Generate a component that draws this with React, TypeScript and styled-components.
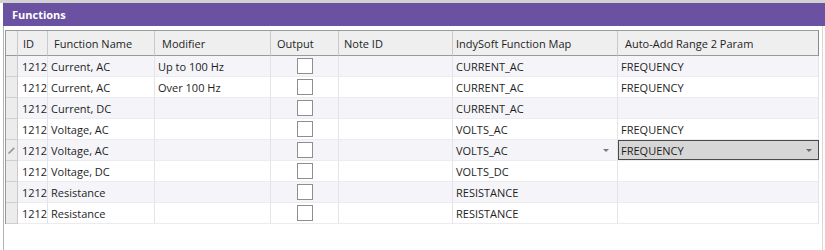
import React from "react";
import styled, { createGlobalStyle } from "styled-components";

const Global = createGlobalStyle`
  html, body { margin: 0; padding: 0; background: #ffffff; }
  body { font-family: "Open Sans", "Noto Sans", sans-serif; font-size: 11px; color: #1e1e1e; }
`;

const Window = styled.div`
  width: 825px;
  height: 250px;
  box-sizing: border-box;
  border-top: 3px solid #d2d2d2;
  display: flex;
  flex-direction: column;
  overflow: hidden;
  background: #fff;
`;

const TitleBar = styled.div`
  height: 23px;
  margin-left: 3px;
  background: #6a51a1;
  color: #fff;
  font-weight: 700;
  font-size: 11px;
  display: flex;
  align-items: center;
  padding-left: 9px;
  flex-shrink: 0;
`;

const Body = styled.div`
  flex: 1;
  display: flex;
  margin-left: 3px;
  padding-top: 4px;
  border-left: 1px solid #b4b4b4;
  border-right: 1px solid #d8d8d8;
  margin-right: 2px;
`;

const Table = styled.div`
  margin-left: 1px;
  align-self: flex-start;
  display: grid;
  grid-template-columns: 12px 30px 107px 116px 68px 114px 165px 201px;
  border-left: 1px solid #9a9a9a;
  border-top: 1px solid #9a9a9a;
`;

const HeadCell = styled.div<{ $last?: boolean; $pad: number }>`
  height: 24px;
  background: #efefef;
  border-right: 1px solid ${(p) => (p.$last ? "#8a8a8a" : "#c9c9c9")};
  border-bottom: 1px solid #9a9a9a;
  display: flex;
  align-items: center;
  padding-left: ${(p) => p.$pad}px;
  white-space: nowrap;
  overflow: hidden;
`;

const IndicatorHead = styled.div`
  height: 24px;
  background: #efefef;
  border-right: 1px solid #c9c9c9;
  border-bottom: 1px solid #9a9a9a;
`;

const Indicator = styled.div`
  height: 20px;
  background: #ececec;
  border-right: 1px solid #c9c9c9;
  border-bottom: 1px solid #cfcfcf;
  display: flex;
  align-items: center;
  justify-content: center;
`;

const Cell = styled.div<{ $odd: boolean; $center?: boolean; $pad?: number }>`
  height: 20px;
  background: ${(p) => (p.$odd ? "#f5f5f9" : "#ffffff")};
  border-right: 1px solid #e4e4e8;
  border-bottom: 1px solid #ececf0;
  display: flex;
  align-items: center;
  justify-content: ${(p) => (p.$center ? "center" : "flex-start")};
  padding-left: ${(p) => (p.$center ? 0 : p.$pad ?? 3)}px;
  white-space: nowrap;
  overflow: hidden;
`;

const EditCell = styled.div`
  height: 20px;
  background: #f5f5f9;
  border-bottom: 1px solid #ececf0;
  display: flex;
  align-items: stretch;
`;

const EditBox = styled.div`
  flex: 1;
  background: #d6d6d6;
  border: 1px solid #4a4a4a;
  display: flex;
  align-items: center;
  justify-content: space-between;
  padding-left: 2px;
  padding-right: 6px;
`;

const CellText = styled.span`
  flex: 1;
`;

const Arrow = styled.span`
  width: 0;
  height: 0;
  border-left: 3.5px solid transparent;
  border-right: 3.5px solid transparent;
  border-top: 3px solid #7a7a7a;
  margin-right: 8px;
`;

const EditArrow = styled(Arrow)`
  margin-right: 0;
  border-top-color: #6a6a6a;
`;

const Check = styled.div`
  width: 14px;
  height: 14px;
  border: 1px solid #8e8e8e;
  background: #fff;
`;

type Row = {
  name: string;
  modifier: string;
  map: string;
  auto: string;
  editing?: boolean;
};

const rows: Row[] = [
  { name: "Current, AC", modifier: "Up to 100 Hz", map: "CURRENT_AC", auto: "FREQUENCY" },
  { name: "Current, AC", modifier: "Over 100 Hz", map: "CURRENT_AC", auto: "FREQUENCY" },
  { name: "Current, DC", modifier: "", map: "CURRENT_AC", auto: "" },
  { name: "Voltage, AC", modifier: "", map: "VOLTS_AC", auto: "FREQUENCY" },
  { name: "Voltage, AC", modifier: "", map: "VOLTS_AC", auto: "FREQUENCY", editing: true },
  { name: "Voltage, DC", modifier: "", map: "VOLTS_DC", auto: "" },
  { name: "Resistance", modifier: "", map: "RESISTANCE", auto: "" },
  { name: "Resistance", modifier: "", map: "RESISTANCE", auto: "" },
];

const headers: { label: string; pad: number }[] = [
  { label: "ID", pad: 5 },
  { label: "Function Name", pad: 6 },
  { label: "Modifier", pad: 7 },
  { label: "Output", pad: 6 },
  { label: "Note ID", pad: 5 },
  { label: "IndySoft Function Map", pad: 3 },
  { label: "Auto-Add Range 2 Param", pad: 7 },
];

const Pencil = () => (
  <svg width="9" height="9" viewBox="0 0 9 9">
    <path d="M1 8 L1.6 6.2 L6.6 1.2 L7.8 2.4 L2.8 7.4 Z" fill="#9a9a9a" />
  </svg>
);

export default function App() {
  return (
    <>
      <Global />
      <Window>
        <TitleBar>Functions</TitleBar>
        <Body>
          <Table>
            <IndicatorHead />
            {headers.map((h, i) => (
              <HeadCell key={h.label} $last={i === headers.length - 1} $pad={h.pad}>
                {h.label}
              </HeadCell>
            ))}
            {rows.map((r, i) => {
              const odd = i % 2 === 0;
              return (
                <React.Fragment key={i}>
                  <Indicator>{r.editing ? <Pencil /> : null}</Indicator>
                  <Cell $odd={odd} $pad={4}>1212</Cell>
                  <Cell $odd={odd}>{r.name}</Cell>
                  <Cell $odd={odd}>{r.modifier}</Cell>
                  <Cell $odd={odd} $center>
                    <Check />
                  </Cell>
                  <Cell $odd={odd} />
                  <Cell $odd={odd}>
                    <CellText>{r.map}</CellText>
                    {r.editing ? <Arrow /> : null}
                  </Cell>
                  {r.editing ? (
                    <EditCell>
                      <EditBox>
                        <span>{r.auto}</span>
                        <EditArrow />
                      </EditBox>
                    </EditCell>
                  ) : (
                    <Cell $odd={odd}>{r.auto}</Cell>
                  )}
                </React.Fragment>
              );
            })}
          </Table>
        </Body>
      </Window>
    </>
  );
}
